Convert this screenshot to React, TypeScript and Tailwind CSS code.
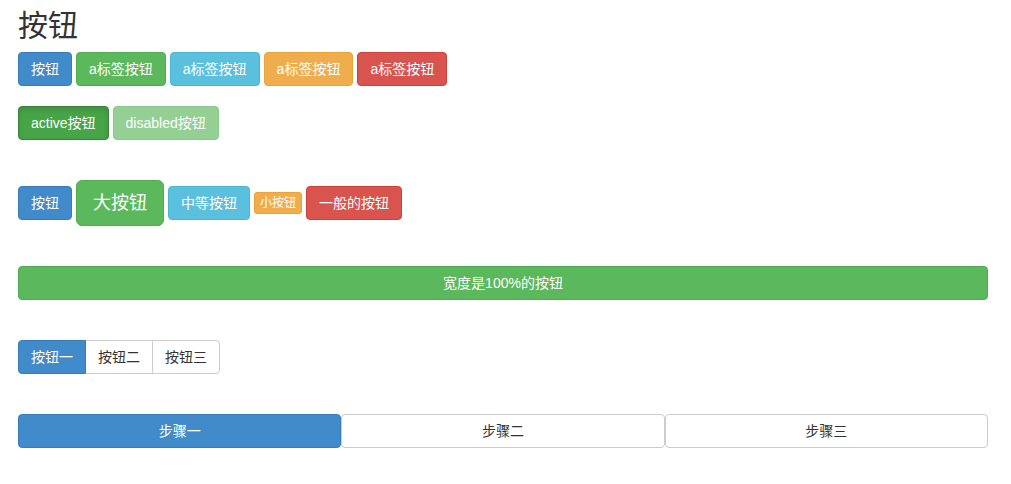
import type { ReactNode } from 'react'

const base =
  'inline-flex items-center justify-center whitespace-nowrap border rounded-[4px] text-[14px] leading-[20px] px-[12px] py-[6px] text-white'

const tones = {
  primary: 'bg-[#428bca] border-[#357ebd]',
  success: 'bg-[#5cb85c] border-[#4cae4c]',
  info: 'bg-[#5bc0de] border-[#46b8da]',
  warning: 'bg-[#f0ad4e] border-[#eea236]',
  danger: 'bg-[#d9534f] border-[#d43f3a]',
}

const Btn = ({ tone, children, extra = '' }: { tone: keyof typeof tones; children: ReactNode; extra?: string }) => (
  <span className={`${base} ${tones[tone]} ${extra}`}>{children}</span>
)

export default function App() {
  return (
    <div
      className="min-h-[484px] bg-white text-[#333]"
      style={{ fontFamily: '"Liberation Sans", "Noto Sans CJK SC", sans-serif' }}
    >
      <div className="ml-[18px] w-[970px]">
        <h1 className="pt-[8px] mb-[8px] text-[30px] leading-[36px] font-normal">按钮</h1>

        <div className="flex gap-[4px]">
          <Btn tone="primary">按钮</Btn>
          <Btn tone="success">a标签按钮</Btn>
          <Btn tone="info">a标签按钮</Btn>
          <Btn tone="warning">a标签按钮</Btn>
          <Btn tone="danger">a标签按钮</Btn>
        </div>

        <div className="mt-[20px] flex gap-[4px]">
          <Btn tone="success" extra="!bg-[#47a447] !border-[#398439] shadow-[inset_0_3px_5px_rgba(0,0,0,0.125)]">
            active按钮
          </Btn>
          <Btn tone="success" extra="opacity-65">disabled按钮</Btn>
        </div>

        <div className="mt-[40px] flex items-center gap-[4px]">
          <Btn tone="primary">按钮</Btn>
          <Btn tone="success" extra="!text-[18px] !leading-[24px] !px-[16px] !py-[10px] !rounded-[6px]">
            大按钮
          </Btn>
          <Btn tone="info">中等按钮</Btn>
          <Btn tone="warning" extra="!text-[12px] !leading-[18px] !px-[5px] !py-[1px] !rounded-[3px]">
            小按钮
          </Btn>
          <Btn tone="danger">一般的按钮</Btn>
        </div>

        <div className="mt-[40px]">
          <Btn tone="success" extra="w-full">宽度是100%的按钮</Btn>
        </div>

        <div className="mt-[40px] flex">
          <span className={`${base} ${tones.primary} rounded-r-none relative z-10`}>按钮一</span>
          <span className={`${base} bg-white border-[#ccc] !text-[#333] rounded-none -ml-px`}>按钮二</span>
          <span className={`${base} bg-white border-[#ccc] !text-[#333] rounded-l-none -ml-px`}>按钮三</span>
        </div>

        <div className="mt-[40px] grid grid-cols-3">
          <span className={`${base} ${tones.primary}`}>步骤一</span>
          <span className={`${base} bg-white border-[#ccc] !text-[#333]`}>步骤二</span>
          <span className={`${base} bg-white border-[#ccc] !text-[#333]`}>步骤三</span>
        </div>
      </div>
    </div>
  )
}
